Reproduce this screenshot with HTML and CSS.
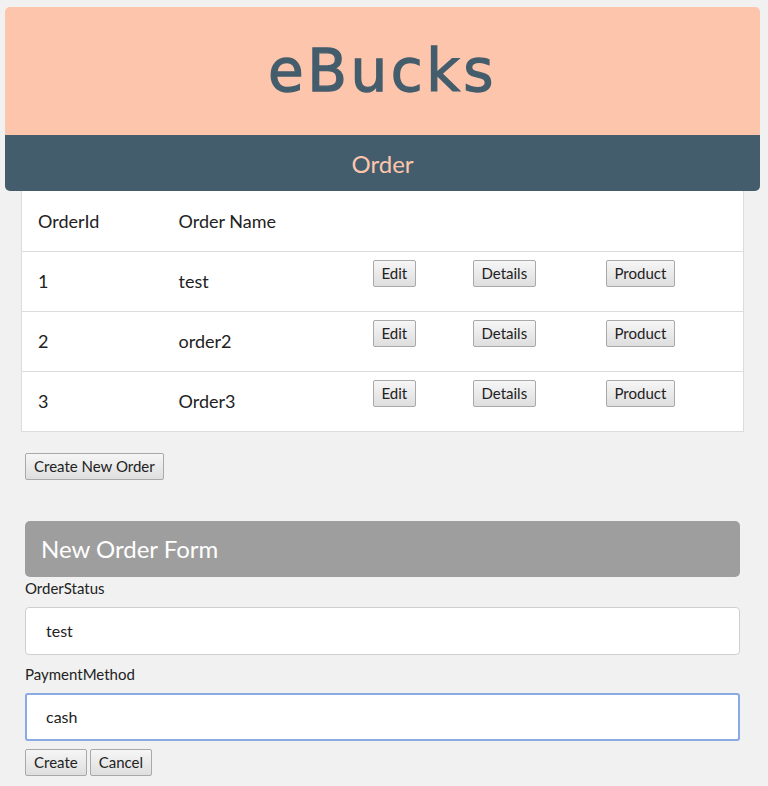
FILE: index.html
```html
<!DOCTYPE html>
<html>
<head>
<meta charset="utf-8">
<link rel="stylesheet" href="styles.css">
</head>
<body>
<div class="page">
  <header class="brand"><h1>eBucks</h1></header>
  <div class="section-bar">Order</div>
  <div class="content">
    <table class="orders">
      <colgroup>
        <col class="c1"><col class="c2"><col class="c3"><col class="c4"><col class="c5">
      </colgroup>
      <thead>
        <tr><th>OrderId</th><th>Order Name</th><th></th><th></th><th></th></tr>
      </thead>
      <tbody>
        <tr><td>1</td><td>test</td><td class="act"><button>Edit</button></td><td class="act"><button>Details</button></td><td class="act"><button>Product</button></td></tr>
        <tr><td>2</td><td>order2</td><td class="act"><button>Edit</button></td><td class="act"><button>Details</button></td><td class="act"><button>Product</button></td></tr>
        <tr><td>3</td><td>Order3</td><td class="act"><button>Edit</button></td><td class="act"><button>Details</button></td><td class="act"><button>Product</button></td></tr>
      </tbody>
    </table>
    <div class="new-wrap"><button>Create New Order</button></div>
    <section class="form">
      <div class="form-head">New Order Form</div>
      <label class="lbl">OrderStatus</label>
      <div class="field">test</div>
      <label class="lbl">PaymentMethod</label>
      <div class="field focus">cash</div>
      <div class="actions"><button>Create</button><button>Cancel</button></div>
    </section>
  </div>
</div>
</body>
</html>
```

FILE: styles.css
```css
html, body {
  margin: 0;
  padding: 0;
  background: #f1f1f1;
  font-family: Lato, "Open Sans", sans-serif;
  color: #222;
}
.page {
  padding: 7px 8px 0 5px;
}
.brand {
  background: #fdc5ac;
  height: 128px;
  border-radius: 5px 5px 0 0;
  display: flex;
  align-items: center;
  justify-content: center;
}
.brand h1 {
  margin: 0;
  font-family: "DejaVu Sans", sans-serif;
  font-weight: 400;
  font-size: 58px;
  color: #435d6c;
  letter-spacing: 3.5px;
  -webkit-text-stroke: 1.3px #435d6c;
}
.section-bar {
  background: #435d6c;
  color: #fdc5ac;
  height: 56px;
  border-radius: 0 0 5px 5px;
  display: flex;
  align-items: center;
  justify-content: center;
  font-size: 24px;
}
.content {
  padding: 0 16px;
}
.orders {
  width: 100%;
  border-collapse: collapse;
  background: #fff;
  border: 1px solid #dcdcdc;
  border-top: none;
  font-size: 18px;
  table-layout: fixed;
}
.c1 { width: 141px; }
.c2 { width: 194px; }
.c3 { width: 100px; }
.c4 { width: 133px; }
.orders th, .orders td {
  box-sizing: border-box;
  height: 60px;
  padding: 0 16px;
  text-align: left;
  font-weight: 400;
  vertical-align: middle;
  border-bottom: 1px solid #dcdcdc;
  color: #222;
}
.orders tbody tr:last-child td { border-bottom: none; }
.orders td.act {
  vertical-align: top;
  padding-top: 8px;
}
button {
  box-sizing: border-box;
  height: 27px;
  font-family: Lato, "Open Sans", sans-serif;
  font-size: 15px;
  line-height: 19px;
  padding: 3px 8px;
  color: #222;
  background: linear-gradient(#f6f6f6, #dedede);
  border: 1px solid #a9a9a9;
  border-radius: 2px;
  margin: 0;
}
.new-wrap {
  margin-top: 21px;
  padding: 0 4px;
}
.form {
  margin-top: 41px;
  padding: 0 4px;
}
.form-head {
  background: #9e9e9e;
  color: #fff;
  height: 56px;
  border-radius: 5px;
  display: flex;
  align-items: center;
  padding-left: 16px;
  font-size: 24px;
}
.lbl {
  display: block;
  font-size: 15px;
  line-height: 18px;
  margin-top: 2px;
  color: #222;
}
.field {
  margin-top: 10px;
  height: 46px;
  background: #fff;
  border: 1px solid #cfcfcf;
  border-radius: 4px;
  display: flex;
  align-items: center;
  padding-left: 20px;
  font-size: 16px;
  color: #222;
}
.field + .lbl { margin-top: 10px; }
.field.focus {
  border: 2px solid #8aaae4;
  height: 44px;
  border-radius: 3px;
  padding-left: 19px;
}
.actions {
  margin-top: 8px;
  display: flex;
  gap: 3px;
}
```
